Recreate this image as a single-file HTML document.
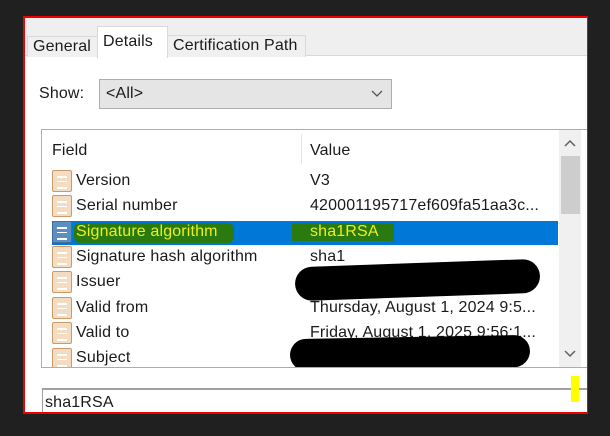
<!DOCTYPE html>
<html><head><meta charset="utf-8"><style>
*{margin:0;padding:0;box-sizing:border-box}
body{width:610px;height:436px;background:#202020;position:relative;overflow:hidden;font-family:"Liberation Sans",sans-serif;font-size:16px;letter-spacing:0.15px;color:#1a1a1a}
.frame{position:absolute;left:23px;top:16px;width:565px;height:398px;border:2px solid #e00;border-right-width:1px;background:#fff;overflow:hidden}
.top{position:absolute;left:0;top:0;right:0;height:38px;background:#efefef;border-bottom:1px solid #d9d9d9}
.tab{position:absolute;background:#f0f0f0;border:1px solid #d9d9d9;border-bottom:none;padding-left:5px;line-height:20px}
.a{position:absolute;white-space:nowrap}
.icon{position:absolute;left:10px;width:20px;height:22px;border:1px solid #c99a6a;border-radius:2px;background:#f3dcc2}
.icon:after{content:"";position:absolute;left:4px;top:5px;width:10px;height:9px;border-top:2px solid #fff;border-bottom:2px solid #fff;background:linear-gradient(#fff,#fff) 0 3px/10px 1px no-repeat}
</style></head><body>
<div class="frame">
 <div class="top"></div>
 <div class="tab" style="left:2px;top:18px;width:71px;height:21px">General</div>
 <div class="tab" style="left:72px;top:8px;width:71px;height:32px;background:#fff;padding-top:5px">Details</div>
 <div class="tab" style="left:142px;top:17px;width:139px;height:22px">Certification Path</div>
 <div class="a" style="left:14px;top:67px">Show:</div>
 <div class="a" style="left:74px;top:61px;width:293px;height:30px;background:#e5e5e5;border:1px solid #adadad"><span style="position:absolute;left:6px;top:5px">&lt;All&gt;</span>
  <svg style="position:absolute;right:8px;top:10px" width="12" height="8"><path d="M1 1l5 5 5-5" fill="none" stroke="#555" stroke-width="1.3"/></svg></div>
 <div class="a" style="left:16px;top:111px;width:547px;height:239px;border:1px solid #adadad;overflow:hidden">
  <div class="a" style="left:10px;top:12px">Field</div>
  <div class="a" style="left:259px;top:4px;width:1px;height:30px;background:#e5e5e5"></div>
  <div class="a" style="left:268px;top:12px">Value</div>
  <div class="a" style="left:10px;top:91px;width:506px;height:24px;background:#0078d7"></div>
  <div class="a" style="left:32px;top:93px;width:160px;height:20px;background:#2a7a10;border-radius:6px"></div>
  <div class="a" style="left:250px;top:93px;width:102px;height:18px;background:#2a7a10"></div>
  <div style="position:absolute;left:0;top:40px">
   <div class="icon" style="top:0"></div><div class="a" style="left:34px;top:2px">Version</div><div class="a" style="left:268px;top:2px">V3</div>
   <div class="icon" style="top:25px"></div><div class="a" style="left:34px;top:27px">Serial number</div><div class="a" style="left:268px;top:27px">420001195717ef609fa51aa3c...</div>
   <div class="icon" style="top:51px;background:#5a8fc0;border-color:#3f6f9a"></div><div class="a" style="left:34px;top:53px;color:#e8f020">Signature algorithm</div><div class="a" style="left:268px;top:53px;color:#e8f020">sha1RSA</div>
   <div class="icon" style="top:76px"></div><div class="a" style="left:34px;top:78px">Signature hash algorithm</div><div class="a" style="left:268px;top:78px">sha1</div>
   <div class="icon" style="top:101px"></div><div class="a" style="left:34px;top:103px">Issuer</div>
   <div class="icon" style="top:127px"></div><div class="a" style="left:34px;top:129px">Valid from</div><div class="a" style="left:268px;top:129px">Thursday, August 1, 2024 9:5...</div>
   <div class="icon" style="top:152px"></div><div class="a" style="left:34px;top:154px">Valid to</div><div class="a" style="left:268px;top:154px">Friday, August 1, 2025 9:56:1...</div>
   <div class="icon" style="top:178px"></div><div class="a" style="left:34px;top:179px">Subject</div>
  </div>
  <div class="a" style="left:253px;top:133px;width:245px;height:34px;background:#000;border-radius:17px;transform:rotate(-2deg)"></div>
  <div class="a" style="left:248px;top:207px;width:240px;height:32px;background:#000;border-radius:16px;transform:rotate(-1deg)"></div>
  <div class="a" style="left:517px;top:0;width:22px;height:237px;background:#f0f0f0"></div>
  <div class="a" style="left:519px;top:26px;width:19px;height:58px;background:#cdcdcd"></div>
  <svg class="a" style="left:522px;top:9px" width="12" height="8"><path d="M1 7l5-5 5 5" fill="none" stroke="#606060" stroke-width="1.5"/></svg>
  <svg class="a" style="left:522px;top:220px" width="12" height="8"><path d="M1 1l5 5 5-5" fill="none" stroke="#606060" stroke-width="1.5"/></svg>
 </div>
 <div class="a" style="left:17px;top:370px;width:550px;height:30px;border-top:2px solid #a0a0a0;border-left:1px solid #a0a0a0"></div>
 <div class="a" style="left:20px;top:376px">sha1RSA</div>
 <div class="a" style="left:546px;top:358px;width:8px;height:26px;background:#ff0"></div>
</div>
</body></html>
